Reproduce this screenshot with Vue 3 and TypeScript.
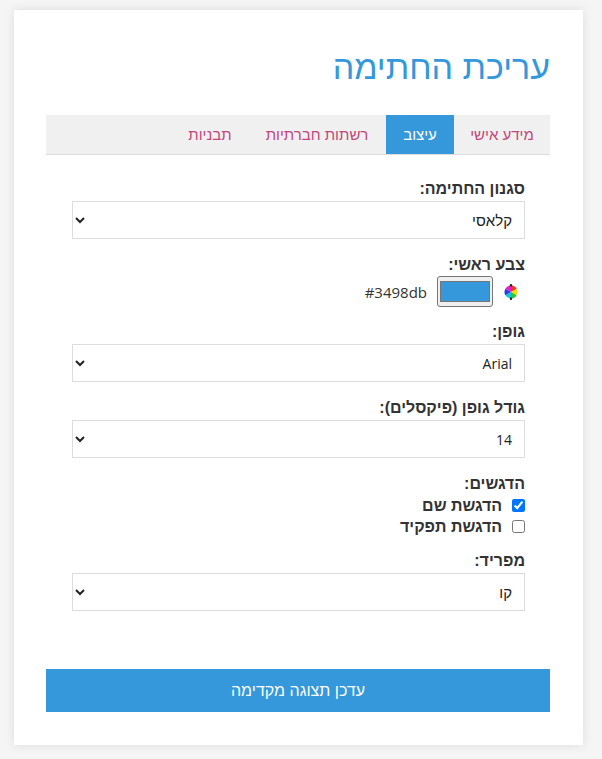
<script setup lang="ts">
const tabs = [
  { label: 'מידע אישי', active: false },
  { label: 'עיצוב', active: true },
  { label: 'רשתות חברתיות', active: false },
  { label: 'תבניות', active: false },
]
</script>

<template>
  <div class="page" dir="rtl">
    <div class="card">
      <h1 class="title">עריכת החתימה</h1>
      <div class="tabs">
        <div v-for="t in tabs" :key="t.label" class="tab" :class="{ active: t.active }">{{ t.label }}</div>
      </div>
      <div class="panel">
        <div class="group">
          <label class="lbl">סגנון החתימה:</label>
          <select class="sel he"><option>קלאסי</option></select>
        </div>
        <div class="group group-color">
          <label class="lbl">צבע ראשי:</label>
          <div class="color-row">
            <svg class="wheel" width="16" height="16" viewBox="0 0 16 16">
              <path d="M8 8 L8 1.5 A6.5 6.5 0 0 1 13.6 4.75 Z" fill="#f2331f" />
              <path d="M8 8 L13.6 4.75 A6.5 6.5 0 0 1 13.6 11.25 Z" fill="#f7d90c" />
              <path d="M8 8 L13.6 11.25 A6.5 6.5 0 0 1 8 14.5 Z" fill="#2fc43a" />
              <path d="M8 8 L8 14.5 A6.5 6.5 0 0 1 2.4 11.25 Z" fill="#12c6d8" />
              <path d="M8 8 L2.4 11.25 A6.5 6.5 0 0 1 2.4 4.75 Z" fill="#2a3ae0" />
              <path d="M8 8 L2.4 4.75 A6.5 6.5 0 0 1 8 1.5 Z" fill="#e020c8" />
              <circle cx="8" cy="1.2" r="1.2" fill="#222" />
              <circle cx="8" cy="14.8" r="1.2" fill="#222" />
            </svg>
            <div class="swatch"><div class="swatch-in"></div></div>
            <span class="hex">#3498db</span>
          </div>
        </div>
        <div class="group">
          <label class="lbl">גופן:</label>
          <select class="sel"><option>Arial</option></select>
        </div>
        <div class="group">
          <label class="lbl">גודל גופן (פיקסלים):</label>
          <select class="sel"><option>14</option></select>
        </div>
        <div class="group group-checks">
          <label class="lbl">הדגשים:</label>
          <label class="chk"><input type="checkbox" checked /><span>הדגשת שם</span></label>
          <label class="chk"><input type="checkbox" /><span>הדגשת תפקיד</span></label>
        </div>
        <div class="group">
          <label class="lbl">מפריד:</label>
          <select class="sel he"><option>קו</option></select>
        </div>
      </div>
      <button class="update">עדכן תצוגה מקדימה</button>
    </div>
  </div>
</template>

<style>
html, body { margin: 0; background: #f5f5f5; }
</style>

<style scoped>
.page {
  box-sizing: border-box;
  width: 602px;
  height: 759px;
  padding: 10px 19px 14px 14px;
  font-family: "Liberation Sans", "Open Sans", sans-serif;
  color: #333;
  background: #f5f5f5;
}
.card {
  box-sizing: border-box;
  height: 735px;
  background: #fff;
  padding: 32px 33px 33px 32px;
  box-shadow: 0 0 10px rgba(0, 0, 0, 0.1);
}
.title {
  margin: 0 0 23px;
  font-size: 34px;
  line-height: 50px;
  font-weight: 400;
  color: #3498db;
}
.tabs {
  display: grid;
  grid-template-columns: 96px 68px 138px 76px;
  background: #f0f0f0;
  border-bottom: 1px solid #ddd;
  height: 39px;
}
.tab {
  text-align: center;
  line-height: 39px;
  font-size: 15px;
  color: #c2477a;
  white-space: nowrap;
}
.active { background: #3498db; color: #fff; }
.panel { padding: 24px 25px 0 26px; }
.group { margin-bottom: 16px; }
.lbl {
  display: block;
  font-size: 16px;
  line-height: 20px;
  font-weight: 700;
  margin-bottom: 2px;
}
.group-checks { margin-bottom: 14px; }
.group-checks .lbl { margin-bottom: 1px; }
.sel {
  display: block;
  box-sizing: border-box;
  width: 100%;
  height: 38px;
  padding: 0 8px;
  font-family: "Open Sans", "Liberation Sans", sans-serif;
  font-size: 14px;
  border: 1px solid #ddd;
  background: #fff;
  color: #222;
  border-radius: 0;
}
.he { font-family: "Liberation Sans", sans-serif; font-size: 15px; }
.color-row {
  display: flex;
  align-items: center;
  height: 29px;
  padding-right: 6px;
}
.wheel { margin-left: 10px; flex: none; }
.swatch {
  box-sizing: border-box;
  width: 56px;
  height: 31px;
  border: 1px solid #767676;
  border-radius: 3px;
  background: #efefef;
  padding: 4px 2px;
  flex: none;
}
.swatch-in { height: 100%; background: #3498db; border: 1px solid #767676; box-sizing: border-box; }
.hex { font-family: "Open Sans", sans-serif; font-size: 15px; margin-right: 10px; }
.chk { display: flex; align-items: center; font-weight: 700; font-size: 16px; line-height: 21px; }
.chk input { margin: 0 0 0 10px; width: 13px; height: 13px; accent-color: #0075ff; }
.update {
  display: block;
  width: 100%;
  height: 43px;
  margin-top: 58px;
  border: 0;
  background: #3498db;
  color: #fff;
  font-family: inherit;
  font-size: 16px;
}
</style>
